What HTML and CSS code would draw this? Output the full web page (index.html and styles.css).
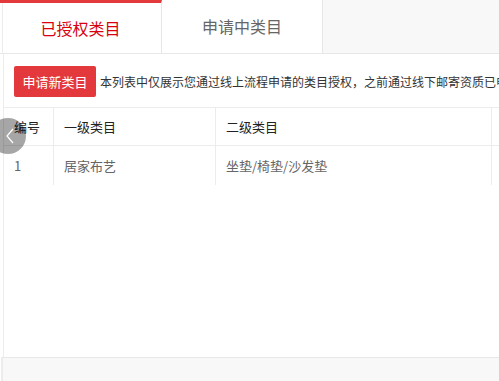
FILE: index.html
```html
<!DOCTYPE html>
<html lang="zh-CN">

<head>
    <meta charset="UTF-8">
    <meta name="viewport" content="width=device-width, initial-scale=1.0">
    <title>类目管理</title>
    <link rel="stylesheet" href="styles.css">
</head>

<body>
    <div class="page">
        <ul class="tabs">
            <li class="tab active">已授权类目</li>
            <li class="tab">申请中类目</li>
        </ul>
        <div class="panel">
            <div class="toolbar">
                <button class="apply-btn">申请新类目</button>
                <span class="notice">本列表中仅展示您通过线上流程申请的类目授权，之前通过线下邮寄资质已申请的类目不在此列表中展示</span>
            </div>
            <table class="cat-table">
                <thead>
                    <tr>
                        <th class="col-no">编号</th>
                        <th class="col-first">一级类目</th>
                        <th class="col-second">二级类目</th>
                        <th class="col-more"></th>
                    </tr>
                </thead>
                <tbody>
                    <tr>
                        <td>1</td>
                        <td>居家布艺</td>
                        <td>坐垫/椅垫/沙发垫</td>
                        <td></td>
                    </tr>
                </tbody>
            </table>
            <a class="prev-btn" href="#">
                <svg width="10" height="16" viewBox="0 0 10 16">
                    <polyline points="8,1 2,8 8,15" fill="none" stroke="#fff" stroke-width="1.2" />
                </svg>
            </a>
        </div>
        <div class="footer"></div>
    </div>
</body>

</html>
```

FILE: styles.css
```css
html,
body {
    height: 100%;
}

body {
    font-family: "Noto Sans CJK SC", "Liberation Sans", sans-serif;
    margin: 0;
    padding: 0;
    background-color: #fff;
    color: #333;
    overflow: hidden;
}

.page {
    width: 720px;
    height: 100%;
    display: flex;
    flex-direction: column;
}

.tabs {
    list-style-type: none;
    margin: 0;
    padding: 0;
    display: flex;
    height: 53px;
    background-color: #f8f8f8;
    border-bottom: 1px solid #e8e8e8;
    flex-shrink: 0;
}

.tab {
    width: 162px;
    box-sizing: border-box;
    background-color: #fff;
    border-right: 1px solid #e6e6e6;
    color: #666;
    font-size: 16px;
    text-align: center;
    line-height: 53px;
}

.tab + .tab {
    width: 161px;
}

.tab.active {
    border-top: 3px solid #e4393c;
    color: #d8000f;
    line-height: 50px;
    box-shadow: inset 2px 0 0 #fff, inset 3px 0 0 #ececec;
}

.panel {
    position: relative;
    flex: 1;
    margin-left: 3px;
    border-left: 1px solid #ececec;
}

.toolbar {
    display: flex;
    align-items: center;
    padding: 12px 0 10px 10px;
    white-space: nowrap;
    overflow: hidden;
}

.apply-btn {
    font-family: inherit;
    background-color: #e4393c;
    color: #fff;
    border: none;
    border-radius: 2px;
    height: 31px;
    width: 82px;
    padding: 0;
    font-size: 13px;
    cursor: pointer;
}

.notice {
    margin-left: 4px;
    font-size: 12px;
    color: #333;
}

.cat-table {
    width: 700px;
    border-collapse: collapse;
    font-size: 13px;
}

.cat-table th,
.cat-table td {
    padding: 0 10px;
    border: 1px solid #ececec;
    text-align: left;
    font-weight: normal;
}

.cat-table tr > :first-child {
    border-left: none;
}

.cat-table tbody td {
    border-bottom: none;
}

.cat-table th {
    height: 37px;
    color: #222;
}

.cat-table td {
    height: 39px;
    color: #666;
}

.col-no {
    width: 29px;
}

.col-first {
    width: 141px;
}

.col-second {
    width: 255px;
}

.prev-btn {
    position: absolute;
    left: -14px;
    top: 64px;
    width: 36px;
    height: 36px;
    border-radius: 50%;
    background-color: rgba(0, 0, 0, 0.35);
    display: flex;
    align-items: center;
    justify-content: center;
}

.prev-btn svg {
    margin-left: 4px;
}

.footer {
    height: 23px;
    flex-shrink: 0;
    margin-left: 1px;
    border-left: 2px solid #ececec;
    border-top: 1px solid #e8e8e8;
    background-color: #f8f8f8;
}
```
